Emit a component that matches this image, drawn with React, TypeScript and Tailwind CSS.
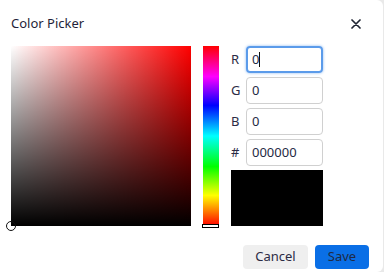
export default function App() {
  const rows = [
    { label: "R", value: "0", focus: true },
    { label: "G", value: "0" },
    { label: "B", value: "0" },
    { label: "#", value: "000000" },
  ];

  return (
    <div className="w-[384px] h-[272px] bg-[#e9e9e9] overflow-hidden" style={{ fontFamily: '"Noto Sans", "Open Sans", sans-serif' }}>
      <div className="w-[383px] h-[272px] bg-white rounded-r-[6px] flex flex-col">
        {/* Header */}
        <div className="flex items-center justify-between pl-[11px] pr-[22px] pt-[9px] h-[38px]">
          <span className="text-[13px] text-[#1f1f3a] leading-none">Color Picker</span>
          <svg width="10" height="10" viewBox="0 0 10 10" className="text-[#1f2433]">
            <path d="M1 1 L9 9 M9 1 L1 9" stroke="currentColor" strokeWidth="1.7" strokeLinecap="round" />
          </svg>
        </div>

        {/* Body */}
        <div className="flex pl-[11px] pt-[8px] gap-[12px]">
          <div className="relative w-[180px] h-[180px] bg-[#ff0000]">
            <div className="absolute inset-0 bg-gradient-to-r from-white to-transparent" />
            <div className="absolute inset-0 bg-gradient-to-b from-transparent to-black" />
            <div className="absolute left-[-5px] bottom-[-5px] w-[10px] h-[10px] rounded-full border-[1.5px] border-[#111] bg-transparent" />
          </div>

          <div className="relative w-[16px] h-[180px] bg-[linear-gradient(to_bottom,#ff0000_0%,#ff00ff_17%,#0000ff_33%,#00ffff_50%,#00ff00_67%,#ffff00_83%,#ff0000_100%)]">
            <div className="absolute left-[-1px] bottom-[-2px] w-[17px] h-[4px] bg-white border border-black" />
          </div>

          <div className="flex flex-col gap-[4px]">
            {rows.map((r) => (
              <div key={r.label} className="flex items-center">
                <span className="w-[15px] text-[13px] text-[#2b2b45]">{r.label}</span>
                <div
                  className={`w-[77px] h-[27px] rounded-[4px] flex items-center px-[4px] text-[13px] text-[#1f2a44] ${
                    r.focus ? "border-2 border-[#5b9bea] shadow-[0_0_3px_#8ab8f0]" : "border border-[#d0d0d0] px-[5px]"
                  }`}
                >
                  {r.value}
                  {r.focus && <span className="w-px h-[15px] bg-[#111]" />}
                </div>
              </div>
            ))}
            <div className="w-[92px] flex-1 bg-black" />
          </div>
        </div>

        {/* Footer */}
        <div className="flex justify-end gap-[7px] pr-[14px] pt-[19px]">
          <button className="w-[65px] h-[24px] rounded-[4px] bg-[#efefef] text-[13px] text-[#2b2b45]">Cancel</button>
          <button className="w-[54px] h-[24px] rounded-[4px] bg-[#0a6fe6] text-[13px] text-[#1f2a44]">Save</button>
        </div>
      </div>
    </div>
  );
}
